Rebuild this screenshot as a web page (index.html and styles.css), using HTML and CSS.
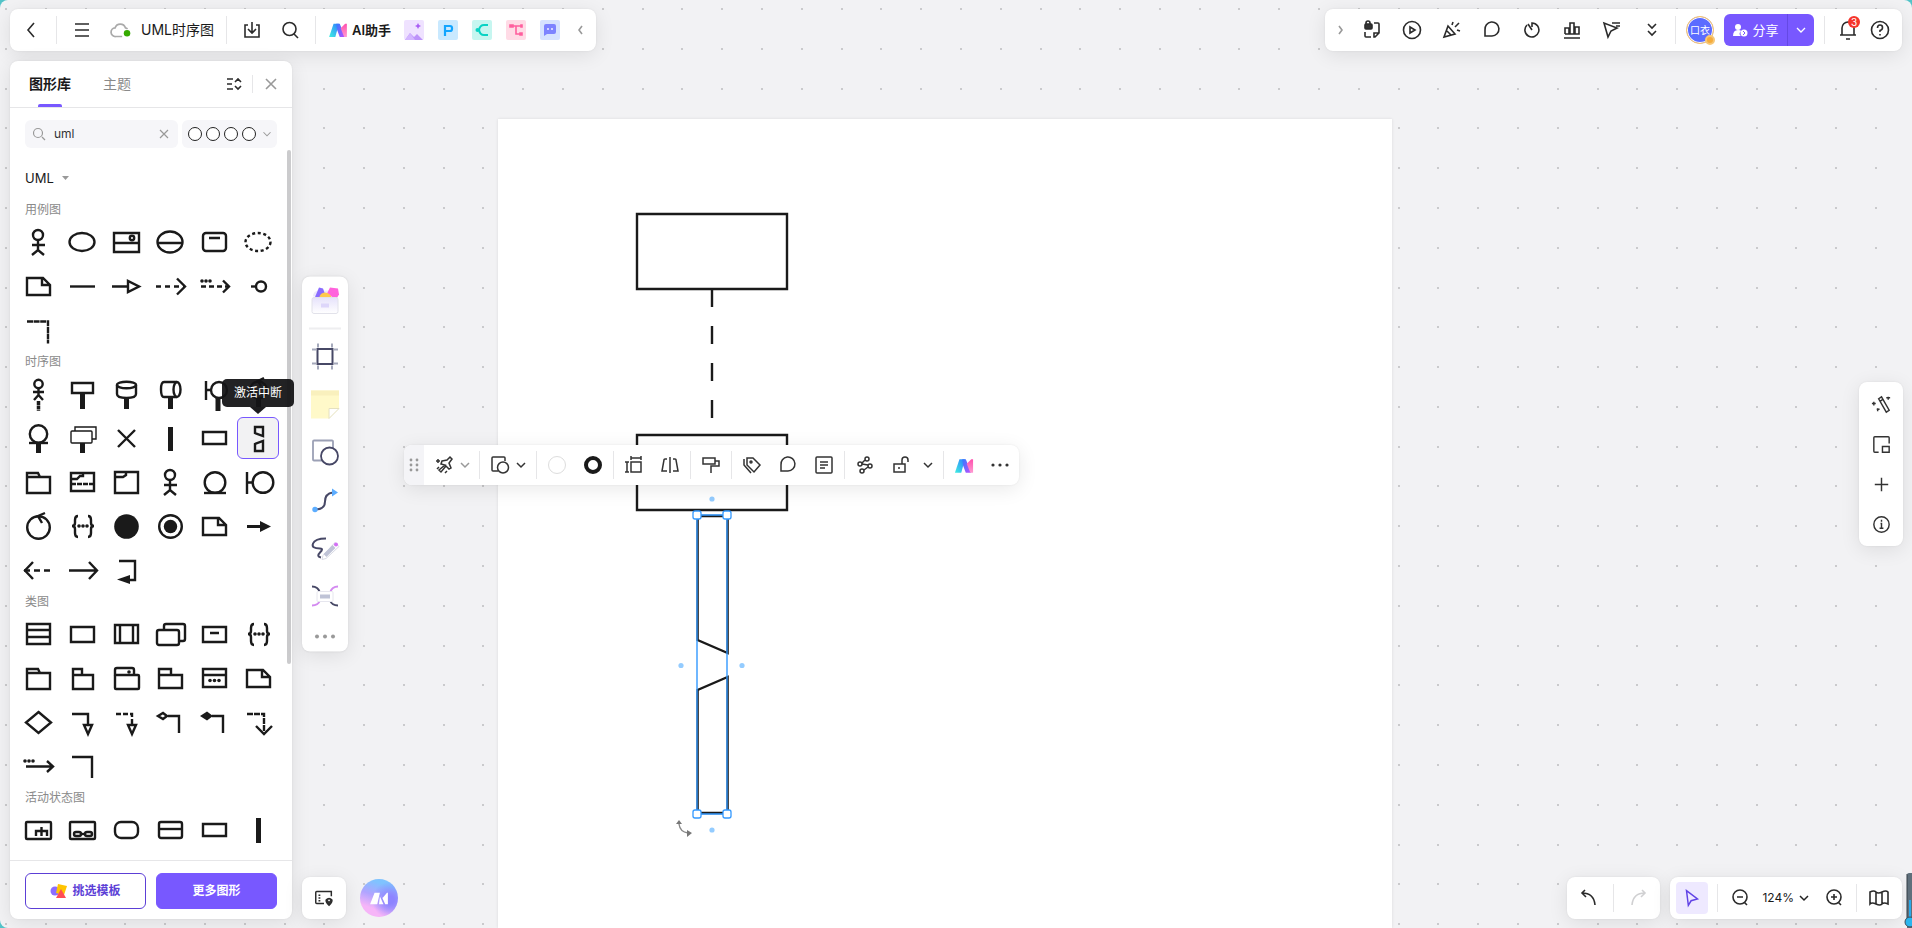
FILE: index.html
```html
<!DOCTYPE html>
<html lang="zh-CN">
<head>
<meta charset="utf-8">
<title>UML时序图</title>
<link rel="stylesheet" href="styles.css">
</head>
<body>
<svg class="defs" aria-hidden="true">
  <defs>
    <linearGradient id="ga" x1="0" y1="1" x2="1" y2="0"><stop offset="0" stop-color="#3ff0e0"/><stop offset="1" stop-color="#2f7dff"/></linearGradient>
    <linearGradient id="gb" x1="0" y1="0" x2="1" y2="1"><stop offset="0" stop-color="#2f7dff"/><stop offset="1" stop-color="#c04dff"/></linearGradient>
    <linearGradient id="gc" x1="0" y1="0" x2="0" y2="1"><stop offset="0" stop-color="#ff4fae"/><stop offset="1" stop-color="#ff9bd0"/></linearGradient>
    <linearGradient id="gbox" x1="0" y1="0" x2="0" y2="1"><stop offset="0" stop-color="#e6e2fb"/><stop offset="1" stop-color="#ffffff"/></linearGradient>
    <symbol id="logo" viewBox="0 0 22 18"><path d="M1 17 6 2h6l-4 15z" fill="url(#ga)"/><path d="M9 2h4l6 15h-6l-3-8z" fill="url(#gb)"/><path d="M14 7l5-5h2v15h-3z" fill="url(#gc)"/></symbol>
    <symbol id="down" viewBox="0 0 16 16"><path d="M4 6l4 4 4-4"/></symbol>
    <symbol id="actor" viewBox="0 0 32 32"><circle cx="16" cy="9" r="5"/><path d="M16 14v10M10 19h13M10 29l6-5 6 5"/></symbol>
    <symbol id="note" viewBox="0 0 32 32"><path d="M5 8h16l7 7v10H5zM20 8v7h8"/></symbol>
    <symbol id="braces" viewBox="0 0 32 32"><path d="M12 6Q9 6 9 10v3q0 3-3 3 3 0 3 3v4q0 4 3 4M22 6q3 0 3 4v3q0 3 3 3-3 0-3 3v4q0 4-3 4"/><g class="solid"><circle cx="13" cy="16" r="1.800"/><circle cx="17" cy="16" r="1.800"/><circle cx="21" cy="16" r="1.800"/></g></symbol>
  </defs>
</svg>

<div class="app">
  <div class="canvas">
    <svg class="dots" aria-hidden="true"><path id="grid"/></svg>
    <div class="page"></div>
    <svg class="drawing" viewBox="0 0 200 640" width="200" height="640" aria-hidden="true">
      <g class="ink">
        <path d="M17 14h150v75H17zM17 235h150v75H17z"/>
        <path d="M92 89v130" stroke-dasharray="18 19"/>
        <path d="M77.600 316h30v137l-30-13zM77.600 613h30V477l-30 13z"/>
      </g>
      <path class="selection" d="M77 315h30v299H77z"/>
      <g class="handle"><rect x="73" y="311" width="8" height="8" rx="2"/><rect x="103" y="311" width="8" height="8" rx="2"/><rect x="73" y="610" width="8" height="8" rx="2"/><rect x="103" y="610" width="8" height="8" rx="2"/></g>
      <g class="anchor"><circle cx="92" cy="299" r="2.600"/><circle cx="61" cy="465.500" r="2.600"/><circle cx="122" cy="465.500" r="2.600"/><circle cx="92" cy="630" r="2.600"/></g>
      <path class="turn" d="M59 624q1 8 9 9"/><path class="turnhead" d="M56 624l3-4 3 4zM67 630l5 3-5 4z"/>
    </svg>
  </div>

  <div class="shell">
    <header class="top">
      <div class="card bar">
        <button class="ib" aria-label="返回"><svg viewBox="0 0 24 24"><path d="M15 5l-6 7 6 7"/></svg></button>
        <i class="sep"></i>
        <button class="ib" aria-label="菜单"><svg viewBox="0 0 24 24"><path d="M5 6h14M5 12h14M5 18h14"/></svg></button>
        <div class="doc">
          <svg class="ic" viewBox="0 0 24 24"><path class="grey" d="M14 18H8a4 4 0 0 1-.5-8A5 5 0 0 1 17 10q1 .2 2 1"/><circle cx="18.500" cy="15" r="3" fill="#36ab00" stroke="none"/></svg>
          <span>UML时序图</span>
        </div>
        <i class="sep"></i>
        <button class="ib" aria-label="导出"><svg viewBox="0 0 24 24"><path d="M8 7H5v12h14V7h-3M12 4v11M8 11l4 4 4-4"/></svg></button>
        <button class="ib" aria-label="搜索"><svg viewBox="0 0 24 24"><circle cx="11.500" cy="11" r="6.500"/><path d="M16 16l4 4"/></svg></button>
        <i class="sep"></i>
        <button class="ai"><svg width="20" height="16"><use href="#logo"/></svg>AI助手</button>
        <div class="apps">
          <button class="app-tile lilac" aria-label="图片"><svg viewBox="0 0 20 20"><path d="M1 20l5-7 4 4 3-3 6 6z" fill="#bd93fa"/><path d="M1 20l5-7 5 7z" fill="#d3b6ff"/><path d="M14 3l1 2 2 1-2 1-1 2-1-2-2-1 2-1z" fill="#a95cf5"/></svg></button>
          <button class="app-tile blue" aria-label="演示"><svg viewBox="0 0 20 20"><path d="M7 16V6h5q2 0 2 2v1q0 2-2 2H8" stroke="#12a5ff" stroke-width="2.200" fill="none"/></svg></button>
          <button class="app-tile mint" aria-label="思维导图"><svg viewBox="0 0 20 20" fill="none" stroke="#08d3c4" stroke-width="2"><path d="M4 10h3q1-5 5-5h4M7 10q1 5 5 5h4"/><circle cx="5.500" cy="10" r="2" fill="#08d3c4" stroke="none"/></svg></button>
          <button class="app-tile pink" aria-label="流程图"><svg viewBox="0 0 20 20" fill="none" stroke="#ff5f9e" stroke-width="1.600"><path d="M6 6h9M10 6v8h5"/><path d="M4 5h3v2H4zM15 5h1v2h-1zM14 13h2v2h-2z" fill="#ff5f9e"/></svg></button>
          <button class="app-tile indigo" aria-label="对话"><svg viewBox="0 0 20 20"><path d="M4 16V6q0-2 2-2h8q2 0 2 2v6q0 2-2 2H7z" fill="#7d83ff"/><path d="M8 8v2M12 8v2" stroke="#fff" stroke-width="1.300"/></svg></button>
        </div>
        <button class="chev pale" aria-label="收起"><svg viewBox="0 0 16 16"><path d="M10 4L7 8l3 4"/></svg></button>
      </div>

      <div class="card bar right">
        <button class="chev pale" aria-label="展开"><svg viewBox="0 0 16 16"><path d="M6 4l3 4-3 4"/></svg></button>
        <div class="tools">
          <button class="ib" aria-label="锁定"><svg viewBox="0 0 24 24"><rect x="5" y="6" width="7" height="5" rx="1" fill="#333"/><path d="M6 6V5q0-2 2-2t2 2v1M14 5h4q1 0 1 1v9l-4 4h-1v-4h5M5 14v4q0 1 1 1h5"/></svg></button>
          <button class="ib" aria-label="播放"><svg viewBox="0 0 24 24"><circle cx="12" cy="12" r="8.500"/><path d="M10 9l5 3-5 3z"/></svg></button>
          <button class="ib" aria-label="庆祝"><svg viewBox="0 0 24 24"><path d="M4 19L8 8l7 8zM7 13l4 4M12 7l1-3M15 9l4-4M17 12l3 1"/></svg></button>
          <button class="ib" aria-label="评论"><svg viewBox="0 0 24 24"><path d="M5 18v-6a7 7 0 1 1 7 6z"/></svg></button>
          <button class="ib" aria-label="计时"><svg viewBox="0 0 24 24"><path d="M7 7a7 7 0 1 0 5-2v4M8 6l4 6"/></svg></button>
          <button class="ib" aria-label="投票"><svg viewBox="0 0 24 24"><path d="M4 20h16M5 16V10h4v6M10 16V5h4v11M15 16V9h4v7zM5 16h14"/></svg></button>
          <button class="ib" aria-label="光标"><svg viewBox="0 0 24 24"><path d="M4 5l4 14 3-6 6-3zM12 5h8M16 8h4"/></svg></button>
          <button class="ib" aria-label="更多"><svg viewBox="0 0 24 24"><path d="M8 6l4 4 4-4M8 13l4 4 4-4"/></svg></button>
        </div>
        <i class="sep"></i>
        <div class="avatar"><span>口衣</span><i class="medal"></i></div>
        <div class="share">
          <button class="share-main"><svg viewBox="0 0 16 16"><circle cx="6" cy="5" r="3"/><path d="M1 14q0-6 5-6 3 0 3 1-3 3 0 5z"/><circle cx="12" cy="11" r="3.500"/><path d="M11 9l2 2-2 2" stroke="#7858ff" fill="none"/></svg>分享</button>
          <button class="share-more" aria-label="分享选项"><svg viewBox="0 0 16 16"><use href="#down"/></svg></button>
        </div>
        <i class="sep"></i>
        <div class="duo">
          <button class="ib bell" aria-label="通知"><svg viewBox="0 0 24 24"><path d="M4 17h16M6 17v-7a6 6 0 0 1 12 0v7M10 21h4"/></svg><b>3</b></button>
          <button class="ib" aria-label="帮助"><svg viewBox="0 0 24 24"><circle cx="12" cy="12" r="8.500"/><path d="M9.500 10q0-3 2.500-3t2.500 2.500T12 12.500V14M12 16v1.500"/></svg></button>
        </div>
      </div>
    </header>

    <aside class="card panel">
      <div class="tabs">
        <button class="tab on">图形库</button>
        <button class="tab">主题</button>
        <div class="tab-tools">
          <button class="chev" aria-label="排序"><svg viewBox="0 0 16 16"><path d="M1 3h6M1 8h5M1 13h6M9 6l3-3 3 3M9 10l3 3 3-3"/></svg></button>
          <i class="sep short"></i>
          <button class="chev pale" aria-label="关闭"><svg viewBox="0 0 16 16"><path d="M3 3l10 10M13 3L3 13"/></svg></button>
        </div>
      </div>
      <div class="filter">
        <label class="search"><svg class="mini" viewBox="0 0 16 16"><circle cx="7" cy="7" r="4.500"/><path d="M11 11l3 3"/></svg><input type="text" value="uml" aria-label="搜索图形"><svg class="mini" viewBox="0 0 16 16"><path d="M4 4l8 8M12 4l-8 8"/></svg></label>
        <button class="swatches" aria-label="样式"><i></i><i></i><i></i><i></i><svg class="mini" viewBox="0 0 16 16"><use href="#down"/></svg></button>
      </div>
      <div class="library">
        <button class="lib-title">UML<svg width="7" height="4" viewBox="0 0 7 4"><path d="M0 0h7L3.500 4z" fill="#999"/></svg></button>

        <h3>用例图</h3>
        <div class="shapes">
          <button aria-label="参与者"><svg><use href="#actor"/></svg></button>
          <button aria-label="用例"><svg><ellipse cx="16" cy="16" rx="12.500" ry="9"/></svg></button>
          <button aria-label="系统"><svg><path d="M4 7h25v19H4zM4 17h25"/><circle cx="22" cy="12" r="2.200"/></svg></button>
          <button aria-label="扩展用例"><svg><ellipse cx="16" cy="16" rx="12.500" ry="10.500"/><path d="M4 17h25"/></svg></button>
          <button aria-label="边界"><svg><rect x="5" y="7" width="23" height="18" rx="3"/><path d="M11 12h11"/></svg></button>
          <button aria-label="协作"><svg><ellipse cx="16" cy="16" rx="12.500" ry="9" stroke-dasharray="3 2.600"/></svg></button>
          <button aria-label="注释"><svg><use href="#note"/></svg></button>
          <button aria-label="关联"><svg><path d="M4 16.500h25"/></svg></button>
          <button aria-label="泛化"><svg><path d="M2 16.500h16M18 11v11l11-5.500z"/></svg></button>
          <button aria-label="依赖"><svg><path d="M2 16.500h28" stroke-dasharray="5 4"/><path d="M23 8.500l8 8-8 8"/></svg></button>
          <button aria-label="包含"><svg><path d="M3 16.500h27" stroke-dasharray="5 3"/><path d="M25 10.500l6 6-6 6"/><g class="solid"><circle cx="4" cy="11" r="1.800"/><circle cx="8" cy="11" r="1.800"/><circle cx="12" cy="11" r="1.800"/></g></svg></button>
          <button aria-label="接口"><svg><path d="M9 16.500h5"/><circle cx="19" cy="16.500" r="5"/></svg></button>
          <button aria-label="锚点"><svg><path d="M5 7.500h21v22" stroke-dasharray="6 .6"/></svg></button>
        </div>

        <h3>时序图</h3>
        <div class="shapes">
          <button aria-label="角色"><svg><circle cx="16.500" cy="6" r="4.200"/><path d="M16.500 10v7M11 14h11M12 22l4.500-5 4.500 5"/><path d="M16.500 23v10" stroke-width="3.500" stroke-dasharray="4 .6"/></svg></button>
          <button aria-label="对象"><svg><path d="M6 5h21v10H6z"/><path class="stem" d="M16.500 15v16"/></svg></button>
          <button aria-label="数据库"><svg><ellipse cx="16.500" cy="7" rx="9.500" ry="3.200"/><path d="M7 7v9q0 4 9.500 4t9.500-4V7"/><path class="stem" d="M16.500 20v11"/></svg></button>
          <button aria-label="队列"><svg><path d="M23 4H10Q7 4 7 11.500T10 19h13"/><ellipse cx="23" cy="11.500" rx="3.500" ry="7.500"/><path class="stem" d="M16.500 19v12"/></svg></button>
          <button aria-label="边界对象"><svg><path d="M8 3v19M8 12h5"/><circle cx="21" cy="12" r="8"/><path class="stem" d="M20 20v13"/></svg></button>
          <button aria-label="控制对象"><svg><circle cx="16.500" cy="12" r="8.500"/><path d="M22 0l-6 3 3 5"/><path class="stem" d="M16.500 20v11"/></svg></button>
          <button aria-label="实体对象"><svg><circle cx="16.500" cy="12" r="8.700"/><path d="M7 21h19"/><path class="stem" d="M16.500 21v10"/></svg></button>
          <button aria-label="多对象"><svg><path d="M9 9V5h21v12h-4" stroke-width="1.400"/><rect x="5" y="9" width="21" height="12" rx="1" stroke-width="1.400"/><path class="stem" d="M16.500 21v10"/></svg></button>
          <button aria-label="销毁"><svg><path d="M8 8l17 17M25 8L8 25"/></svg></button>
          <button aria-label="激活"><svg><path class="stem" d="M16.500 5v24"/></svg></button>
          <button aria-label="矩形"><svg><path d="M5 10h23v12H5z"/></svg></button>
          <button class="picked" aria-label="激活中断"><svg><path d="M13 5h8v9l-8-3zM13 29h8V19l-8 3z"/></svg></button>
          <button aria-label="包"><svg><path d="M5 7h11l2 4h10v16H5zM5 11h13"/></svg></button>
          <button aria-label="组合片段"><svg><path d="M5 7h23v18H5zM5 13h6l3-3h3V7"/><path d="M5 18h23" stroke-dasharray="5 1"/></svg></button>
          <button aria-label="框架"><svg><path d="M5 6h23v21H5zM5 11h8l3-2V6"/></svg></button>
          <button aria-label="小人"><svg><use href="#actor"/></svg></button>
          <button aria-label="实体"><svg><circle cx="17" cy="16.500" r="10.300"/><path d="M6 27h22"/></svg></button>
          <button aria-label="边界类"><svg><path d="M5 6v22M5 16.500h6"/><circle cx="21" cy="16.500" r="10.300"/></svg></button>
          <button aria-label="控制"><svg><circle cx="16.500" cy="17.500" r="11.300"/><path d="M23 3l-7 3 4 7"/></svg></button>
          <button aria-label="约束"><svg><use href="#braces"/></svg></button>
          <button aria-label="起点"><svg><circle class="solid" cx="16.500" cy="16.500" r="12.300"/></svg></button>
          <button aria-label="终点"><svg><circle cx="16.500" cy="16.500" r="11.300"/><circle class="solid" cx="16.500" cy="16.500" r="6.700"/></svg></button>
          <button aria-label="便签"><svg><use href="#note"/></svg></button>
          <button aria-label="消息"><svg><path d="M5 16.500h14" stroke-width="3"/><path class="solid" d="M18 11v11l11-5.500z"/></svg></button>
          <button aria-label="返回消息"><svg><path d="M28 16.500H2" stroke-dasharray="6 4"/><path d="M11 8l-8 8.500 8 8.500"/></svg></button>
          <button aria-label="异步消息"><svg><path d="M3 16.500h28M23 8l8 8.500-8 8.500"/></svg></button>
          <button aria-label="自调用"><svg><path d="M9 7h16v19h-7"/><path class="solid" d="M7 25.500l13-4.500v9z"/></svg></button>
        </div>

        <h3>类图</h3>
        <div class="shapes">
          <button aria-label="类"><svg><path d="M5 6h23v20H5zM5 12h23M5 19h23"/></svg></button>
          <button aria-label="简单类"><svg><path d="M5 9h23v15H5z"/></svg></button>
          <button aria-label="活动类"><svg><path d="M5 7h23v18H5zM10 7v18M23 7v18"/></svg></button>
          <button aria-label="多类"><svg><path d="M10 11V8q0-2 2-2h17q2 0 2 2v13q0 2-2 2h-4"/><rect x="3" y="12" width="22" height="15" rx="2"/></svg></button>
          <button aria-label="接口类"><svg><path d="M5 9h23v15H5zM12 15h9"/></svg></button>
          <button aria-label="类约束"><svg><use href="#braces"/></svg></button>
          <button aria-label="类包"><svg><path d="M5 7h11l2 4h10v16H5zM5 11h13"/></svg></button>
          <button aria-label="小包"><svg><path d="M7 13V7h9v6M7 13h20v14H7z"/></svg></button>
          <button aria-label="组件包"><svg><rect x="5" y="13" width="24" height="14" rx="1"/><path d="M5 14V8q0-2 2-2h15q2 0 2 2v5"/><circle class="solid" cx="19" cy="10" r="1.800"/></svg></button>
          <button aria-label="宽包"><svg><path d="M5 13V7h12v6M5 13h23v13H5z"/></svg></button>
          <button aria-label="对象类"><svg><path d="M5 7h23v18H5zM5 13h23"/><g class="solid"><circle cx="12" cy="18.500" r="1.800"/><circle cx="16.500" cy="18.500" r="1.800"/><circle cx="21" cy="18.500" r="1.800"/></g></svg></button>
          <button aria-label="类注释"><svg><use href="#note"/></svg></button>
          <button aria-label="判断"><svg><path d="M16.500 6L29 16.500 16.500 27 4 16.500z"/></svg></button>
          <button aria-label="继承"><svg><path d="M6 8h16v11M18 19h8l-4 9z"/></svg></button>
          <button aria-label="实现"><svg><path d="M6 8h16v11" stroke-dasharray="5 2"/><path d="M18 19h8l-4 9z"/></svg></button>
          <button aria-label="聚合"><svg><path d="M14 10h11v17M4 10l5-3 4 3-4 3z"/></svg></button>
          <button aria-label="组合"><svg><path d="M14 10h11v17"/><path class="solid" d="M2 10l7-4.500L15 10l-6 4.500z"/></svg></button>
          <button aria-label="类依赖"><svg><path d="M5 8h17v18" stroke-dasharray="6 1"/><path d="M14 20l8 8 8-8"/></svg></button>
          <button aria-label="使用"><svg><path d="M4 16.500h26M25 11l6 5.500-6 5.500"/><g class="solid"><circle cx="3" cy="11" r="1.800"/><circle cx="7" cy="11" r="1.800"/><circle cx="11" cy="11" r="1.800"/></g></svg></button>
          <button aria-label="直角线"><svg><path d="M6 7h20v21"/></svg></button>
        </div>

        <h3>活动状态图</h3>
        <div class="shapes">
          <button aria-label="子活动"><svg><rect x="4" y="8" width="25" height="17" rx="1"/><path d="M14 22v-5h11v5M19.500 13v9"/></svg></button>
          <button aria-label="复合状态"><svg><rect x="4" y="8" width="25" height="17" rx="1"/><rect x="8" y="18" width="7" height="4" rx="2"/><rect x="19" y="18" width="7" height="4" rx="2"/><path d="M15 20h4"/></svg></button>
          <button aria-label="状态"><svg><rect x="5" y="8" width="23" height="16" rx="6"/></svg></button>
          <button aria-label="分栏状态"><svg><rect x="5" y="8" width="23" height="16" rx="2"/><path d="M5 15h23"/></svg></button>
          <button aria-label="对象节点"><svg><path d="M5 10h23v12H5z"/></svg></button>
          <button aria-label="分叉"><svg><path class="stem" d="M16.500 4v25"/></svg></button>
        </div>
        <i class="thumb"></i>
      </div>
      <footer class="foot">
        <button class="btn ghost"><svg width="18" height="16" viewBox="0 0 18 16"><circle cx="5" cy="8" r="4.500" fill="#8c6cff"/><path d="M8 1l9 2-3 9-8-2z" fill="#ffc400"/><path d="M11 6l5 9H6z" fill="#ff4d55"/></svg>挑选模板</button>
        <button class="btn fill">更多图形</button>
      </footer>
    </aside>
  </div>

  <span class="tip" role="tooltip">激活中断</span>

  <nav class="card rail">
    <button aria-label="素材"><svg viewBox="0 0 30 30"><path d="M3 11q0-5 5-6h14q5 1 5 6z" fill="#ece9fb"/><path d="M4 14L9 2l4 1 4 11z" fill="#8a6cff"/><path d="M17 8l3-6 8 1 1 6-3 5z" fill="#ff62dc"/><path d="M9 13q1-6 6-6t7 6z" fill="#ffc94d"/><rect x="2" y="12" width="26" height="16" rx="2" fill="url(#gbox)" stroke="#e2e2ea" stroke-width="1"/><rect x="11" y="18" width="8" height="4" fill="#ddd6fa"/></svg></button>
    <i></i>
    <button aria-label="画框"><svg viewBox="0 0 30 30" fill="none"><path d="M2 8h4M2 22h4M24 8h4M24 22h4M8 2v4M22 2v4M8 24v4M22 24v4" stroke="#a5a9bb" stroke-width="2"/><path d="M7.500 7.500h15v15h-15z" stroke="#474866" stroke-width="2"/></svg></button>
    <button aria-label="便签"><svg viewBox="0 0 30 30"><path d="M1 1h28v18l-10 10H1z" fill="#fff9c9"/><path d="M1 1h28v5H1z" fill="#f9f0bd"/><path d="M19 29V19h10z" fill="#fff" stroke="#e4e0c0" stroke-width="1"/></svg></button>
    <button aria-label="图形"><svg viewBox="0 0 30 30" stroke-width="1.800"><rect x="3" y="3" width="20" height="20" rx="1" fill="#fff" stroke="#9ba0b5"/><circle cx="19.500" cy="18.500" r="8.500" fill="#fff" stroke="#474866"/></svg></button>
    <button aria-label="连线"><svg viewBox="0 0 30 30"><path d="M5 24q10 0 10-8t8-9" fill="none" stroke="#474866" stroke-width="2"/><circle cx="5" cy="24" r="2.700" fill="#5cadff"/><path d="M22 3l6 4-6 4z" fill="#5cadff"/></svg></button>
    <button aria-label="画笔"><svg viewBox="0 0 30 30"><path d="M16 5Q5 5 3 10t7 5q4 0 0 4t1 5" fill="none" stroke="#474866" stroke-width="2"/><path d="M13 22L25 9l4 4-13 12-4 1z" fill="#fff" stroke="#d8dae4" stroke-width="1"/><path d="M15 22l9-9" stroke="#bfc3d6" stroke-width="4"/><circle cx="26" cy="11" r="2" fill="#d270f4"/></svg></button>
    <button aria-label="思维导图"><svg viewBox="0 0 30 30" fill="none" stroke-width="2"><path d="M2 5q6 0 8 6M20 19q2 5 8 5" stroke="#474866"/><path d="M28 5q-6 0-8 6M10 19q-2 5-8 5" stroke="#d38af0"/><rect x="7" y="10" width="16" height="10" rx="1" fill="#fff" stroke="#e6e6ee" stroke-width="1"/><path d="M10 15h10" stroke="#bfc3d6" stroke-width="4"/></svg></button>
    <button class="more" aria-label="更多工具"><svg viewBox="0 0 30 30" fill="#999"><circle cx="7" cy="15" r="2"/><circle cx="15" cy="15" r="2"/><circle cx="23" cy="15" r="2"/></svg></button>
  </nav>

  <div class="card context" role="toolbar">
    <span class="grip"><svg width="12" height="16" viewBox="0 0 12 16" fill="#999"><circle cx="3" cy="3" r="1.400"/><circle cx="9" cy="3" r="1.400"/><circle cx="3" cy="8" r="1.400"/><circle cx="9" cy="8" r="1.400"/><circle cx="3" cy="13" r="1.400"/><circle cx="9" cy="13" r="1.400"/></svg></span>
    <div class="group first"><button aria-label="魔法"><svg viewBox="0 0 24 24"><path d="M10 8l5-1 3-3 2 2-3 4 2 5-2 1-3-3-5 6-2-2 6-5-4-1zM6 6v4M4 8h4M7 14l-2 2M15 18l-2 2"/></svg></button><button class="arrow pale" aria-label="魔法选项"><svg viewBox="0 0 16 16"><use href="#down"/></svg></button></div>
    <div class="group"><button aria-label="切换形状"><svg viewBox="0 0 24 24"><path d="M10 18H5q-1 0-1-1V5q0-1 1-1h11q1 0 1 1v3"/><circle cx="15" cy="14.500" r="5.500"/></svg></button><button class="arrow" aria-label="形状选项"><svg viewBox="0 0 16 16"><use href="#down"/></svg></button></div>
    <div class="group wide"><button aria-label="填充"><i class="fillring"></i></button><button aria-label="边框"><i class="inkring"></i></button></div>
    <div class="group wide"><button aria-label="尺寸"><svg viewBox="0 0 24 24"><path d="M9 9h10v10H9zM9 5h10M9 3v4M19 3v4M5 9v10M3 9h4M3 19h4"/></svg></button><button aria-label="翻转"><svg viewBox="0 0 24 24"><path d="M12 4v16M9 6H7q-1 0-1 1L4 18h5M15 6h2q1 0 1 1l2 11h-5"/></svg></button></div>
    <div class="group"><button aria-label="格式刷"><svg viewBox="0 0 24 24"><path d="M4 5h12v6H4zM16 8h4v5h-8v7"/></svg></button></div>
    <div class="group wide"><button aria-label="标签"><svg viewBox="0 0 24 24"><path d="M7 5h6l7 7-6 7-7-7zM4 6v6l7 8"/><circle cx="11" cy="9" r="1"/></svg></button><button aria-label="评论"><svg viewBox="0 0 24 24"><path d="M5 18v-6a7 7 0 1 1 7 6z"/></svg></button><button aria-label="备注"><svg viewBox="0 0 24 24"><rect x="4" y="4" width="16" height="16" rx="1"/><path d="M8 9h8M8 12h8M8 15h5"/></svg></button></div>
    <div class="group wide"><button aria-label="关联"><svg viewBox="0 0 24 24"><circle cx="14" cy="6" r="2"/><circle cx="7" cy="11" r="2"/><circle cx="17" cy="13" r="2"/><circle cx="9" cy="18" r="2"/><path d="M12 7l-3 3M9 11l6 1M15 14l-4 3"/></svg></button><span class="pair"><button aria-label="解锁"><svg viewBox="0 0 24 24"><path d="M5 11h11v8H5zM10 14v2M13 11V7q0-3 3-3t3 3v2"/></svg></button><button class="arrow" aria-label="锁定选项"><svg viewBox="0 0 16 16"><use href="#down"/></svg></button></span></div>
    <div class="group wide last"><button aria-label="AI"><svg class="logo" viewBox="0 0 22 18"><use href="#logo"/></svg></button><button aria-label="更多"><svg viewBox="0 0 24 24"><g class="solid"><circle cx="5" cy="12" r="1.600"/><circle cx="12" cy="12" r="1.600"/><circle cx="19" cy="12" r="1.600"/></g></svg></button></div>
  </div>

  <nav class="card side">
    <button aria-label="美化"><svg viewBox="0 0 24 24"><path d="M9 6l3-2 8 14-3 2zM10 9l3-2M4 9v4M2 11h4M8 16v3M7 17h3M19 4v3M17 5h4"/></svg></button>
    <button aria-label="小地图"><svg viewBox="0 0 24 24"><path d="M9 20H5q-1 0-1-1V5q0-1 1-1h14q1 0 1 1v6"/><path d="M13 14h7v6h-7z"/></svg></button>
    <button aria-label="添加"><svg viewBox="0 0 24 24"><path d="M12 5v14M5 12h14"/></svg></button>
    <button aria-label="信息"><svg viewBox="0 0 24 24"><circle cx="12" cy="12" r="8"/><path d="M11 11h1v5M10 16h4M12 7v2"/></svg></button>
  </nav>

  <div class="corner left">
    <button class="card mapbtn" aria-label="导航"><svg class="ic" viewBox="0 0 24 24"><path d="M12 18H4q-1 0-1-1V6q0-1 1-1h16v5M6 9h2M6 12h2M6 15h2"/><path d="M17.500 20q-4-4-3-6 3-3 6 0 1 2-3 6z" fill="#333"/><circle cx="17.500" cy="14.500" r="1" fill="#fff" stroke="none"/></svg></button>
    <button class="orb" aria-label="AI助手"><svg width="20" height="16" viewBox="0 0 22 18" fill="#fff"><path d="M1 16L6 3h6L9 16zM12 7l4 9h-5zM13 5l2 4 5-6h1v13h-3z"/></svg></button>
  </div>

  <div class="corner rightc">
    <div class="card mini-bar">
      <button class="ib" aria-label="撤销"><svg viewBox="0 0 24 24"><path d="M8 4L5 7l4 4M5 7q12 0 13 12"/></svg></button>
      <i class="sep"></i>
      <button class="ib faded" aria-label="重做"><svg viewBox="0 0 24 24"><path d="M16 4l3 3-4 4M19 7Q7 7 6 19"/></svg></button>
    </div>
    <div class="card mini-bar zoom">
      <button class="pointer" aria-label="选择"><svg class="ic" viewBox="0 0 24 24"><path d="M6 4l12 9-7 2-3 5z"/></svg></button>
      <i class="sep"></i>
      <button class="ib" aria-label="缩小"><svg viewBox="0 0 24 24"><circle cx="12" cy="11" r="7"/><path d="M16 16l3 3M9 11h6"/></svg></button>
      <button class="percent">124%<svg width="16" height="16" viewBox="0 0 16 16"><use href="#down"/></svg></button>
      <button class="ib" aria-label="放大"><svg viewBox="0 0 24 24"><circle cx="12" cy="11" r="7"/><path d="M16 16l3 3M9 11h6M12 8v6"/></svg></button>
      <i class="sep"></i>
      <button class="ib" aria-label="地图"><svg viewBox="0 0 24 24"><path d="M3 6q4-2 6 0t6 0 6 0v12q-4-2-6 0t-6 0-6 0zM9 6v12M15 6v12"/></svg></button>
    </div>
  </div>
</div>
<svg class="gauge" width="8" height="55" viewBox="0 0 8 55" aria-hidden="true"><path d="M3 55V2q0-2 2-2h3v55z" fill="#5f6f7b"/><path d="M3 46V1" stroke="#333c44"/><path d="M5 27h2v20H5z" fill="#2aa8e8"/><circle cx="6" cy="49" r="5" fill="#2ab5ee" stroke="#3c4c57"/></svg>
<script src="grid.js"></script>
</body>
</html>
```
FILE: grid.js
```js
// Dot grid: 32 unit step at the current zoom level, snapped to whole pixels.
const STEP = 32 * 1.2434;
function drawGrid() {
  let d = "";
  for (let x = 6; x < window.innerWidth; x += STEP) {
    for (let y = 9; y < window.innerHeight; y += STEP) {
      d += `M${Math.round(x) - 1} ${Math.round(y) - 1}h2v2h-2z`;
    }
  }
  document.getElementById("grid").setAttribute("d", d);
}
drawGrid();
window.addEventListener("resize", drawGrid);
```
FILE: styles.css
```css
* { box-sizing: border-box; }
html, body { height: 100%; margin: 0; }
body {
  background: #52c3c8;
  font: 14px/20px Inter, "Noto Sans CJK SC", sans-serif;
  color: #1a1a1a;
  overflow: hidden;
}
button {
  display: flex; align-items: center; justify-content: center;
  margin: 0; padding: 0; border: 0; background: none;
  font: inherit; color: inherit; flex: none;
}
svg { display: block; flex: none; }
.defs { position: absolute; width: 0; height: 0; }
.solid { fill: #1a1a1a; stroke: none; }

.app { position: relative; height: 100%; background: #f2f2f4; border-radius: 8px 8px 0 8px; overflow: hidden; }
.card { background: #fff; border-radius: 8px; box-shadow: 0 0 2px rgba(0,0,0,.08), 0 4px 20px rgba(0,0,0,.09); }
.sep { width: 1px; height: 28px; background: #e6e6e8; flex: none; }
.sep.short { height: 18px; }

/* Canvas */
.canvas { position: absolute; inset: 0; }
.dots { width: 100%; height: 100%; fill: #cacacc; }
.page { position: absolute; left: 498px; top: 119px; bottom: 0; width: 894px; background: #fff; box-shadow: 0 0 3px rgba(0,0,0,.1); }
.drawing { position: absolute; left: 620px; top: 200px; }
.ink { fill: none; stroke: #1a1a1a; stroke-width: 2.4; }
.selection { fill: none; stroke: #3399ff; stroke-width: 1.4; }
.handle { fill: #fff; stroke: #3399ff; stroke-width: 1.3; }
.anchor { fill: #94ccff; }
.turn { fill: none; stroke: #888; stroke-width: 1.4; }
.turnhead { fill: #777; }

/* Shell */
.shell { position: absolute; inset: 0; display: flex; flex-direction: column; gap: 10px; padding: 9px 10px; }
.top { display: flex; justify-content: space-between; flex: none; }
.bar { display: flex; align-items: center; gap: 12px; height: 42px; padding: 0 8px; }
.bar.right { gap: 10px; padding: 0 9px 0 8px; }
.ib, .ic { width: 26px; height: 26px; }
.ib svg { width: 24px; height: 24px; }
.ib svg, .ic, .chev svg, .mini { fill: none; stroke: #2b2b2b; stroke-width: 1.6; }
.grey { stroke: #aaa; }
.chev { width: 16px; height: 16px; }
.chev svg { width: 16px; height: 16px; }
.chev.pale svg { stroke: #999; }
.doc { display: flex; align-items: center; gap: 8px; }
.ai { gap: 4px; margin-right: 1px; font-size: 13px; font-weight: 600; }
.apps { display: flex; gap: 14px; }
.app-tile { width: 20px; height: 20px; border-radius: 2px; }
.app-tile svg { width: 20px; height: 20px; }
.lilac { background: #efe2ff; }
.blue { background: #c9e9ff; }
.mint { background: #c6f6f0; }
.pink { background: #ffdbe6; }
.indigo { background: #d6e2ff; }

.tools { display: flex; gap: 14px; }
.avatar {
  position: relative; display: flex; align-items: center; justify-content: center;
  width: 28px; height: 28px; border-radius: 50%; background: #5b6cff;
  border: 1px solid #ffc766; box-shadow: inset 0 0 0 1px #fff; color: #fff; font-size: 10px;
}
.medal { position: absolute; right: -2px; bottom: -2px; width: 10px; height: 10px; border-radius: 50%; background: #f5ac3c; border: 2px solid #f7c777; }
.share { display: flex; height: 32px; border-radius: 6px; background: #7858ff; color: #fff; overflow: hidden; }
.share-main { gap: 4px; width: 63px; font-size: 13px; }
.share-main svg { width: 16px; height: 16px; fill: #fff; }
.share-more { width: 27px; border-left: 1px solid #6549e4; }
.share-more svg { width: 16px; height: 16px; fill: none; stroke: #fff; stroke-width: 1.3; }
.duo { display: flex; gap: 6px; }
.bell { position: relative; }
.bell b { position: absolute; right: 1px; top: -1px; width: 12px; height: 12px; border-radius: 50%; background: #f5352b; color: #fff; font-size: 10px; line-height: 12px; font-weight: 400; }

/* Shape library */
.panel { display: flex; flex-direction: column; flex: 1; width: 282px; min-height: 0; }
.tabs { display: flex; gap: 32px; height: 47px; padding: 0 13px 0 19px; border-bottom: 1px solid #e6e6e8; flex: none; }
.tab { color: #8a8a8a; }
.tab.on { color: #1a1a1a; font-weight: 700; position: relative; }
.tab.on::after { content: ""; position: absolute; bottom: 0; left: 9px; width: 24px; height: 3px; background: #7858ff; border-radius: 2px 2px 0 0; }
.tab-tools { display: flex; align-items: center; gap: 10px; margin-left: auto; }
.filter { display: flex; gap: 4px; padding: 12px 15px 2px; flex: none; }
.search { display: flex; align-items: center; flex: 1; min-width: 0; height: 28px; padding: 0 6px; gap: 7px; border-radius: 6px; background: #f6f6f9; }
.search input { flex: 1; min-width: 0; padding: 0; border: 0; outline: 0; background: none; font: inherit; font-size: 12px; color: #333; }
.mini { width: 16px; height: 16px; stroke: #999; stroke-width: 1.2; }
.swatches { gap: 4px; width: 95px; height: 28px; padding-left: 2px; border-radius: 6px; background: #f6f6f9; }
.swatches i { width: 14px; height: 14px; border: 1px solid #222; border-radius: 50%; background: #fff; }
.swatches .mini { width: 14px; }
.library { position: relative; flex: 1; min-height: 0; padding: 15px 0 0 7px; overflow: hidden; }
.lib-title { gap: 8px; height: 26px; margin: 0 0 9px 8px; font-size: 13px; }
.library h3 { margin: 1px 0 1px 8px; font-size: 12px; line-height: 20px; font-weight: 400; color: #8a8a8a; }
.shapes { display: grid; grid-template-columns: repeat(6, 42px); gap: 2px; }
.shapes button { height: 42px; border-radius: 6px; }
.shapes svg { width: 32px; height: 32px; overflow: visible; fill: none; stroke: #1a1a1a; stroke-width: 2.4; }
.shapes .solid { fill: #1a1a1a; stroke: none; }
.shapes .stem { stroke-width: 5; }
.shapes .picked { background: #f2f2f3; border: 1px solid #7858ff; }
.thumb { position: absolute; right: 1px; top: 0; width: 4px; height: 514px; border-radius: 2px; background: #cbcbcd; }
.foot { display: flex; gap: 10px; padding: 12px 15px 10px; border-top: 1px solid #e6e6e8; flex: none; }
.btn { flex: 1; height: 36px; gap: 4px; border: 1px solid #7858ff; border-radius: 6px; font-size: 12px; font-weight: 700; }
.ghost { border-color: #5c3fd6; color: #5c3fd6; }
.fill { background: #7858ff; color: #fff; }

.tip { position: absolute; left: 222px; top: 379px; padding: 4px 12px; border-radius: 5px; background: rgba(20,20,22,.94); color: #fff; font-size: 12px; }
.tip::after { content: ""; position: absolute; left: 28px; top: 28px; border: 8px solid transparent; border-top: 7px solid #1c1c1e; border-bottom: 0; }

/* Floating toolbars */
.rail { position: absolute; left: 302px; top: 50%; transform: translateY(-50%); width: 46px; }
.rail button { width: 46px; height: 48px; }
.rail svg { width: 30px; height: 30px; }
.rail > i { display: block; height: 2px; margin: 3px 7px; background: #eeeef0; }
.rail .more { height: 31px; }

.context { position: absolute; left: 404px; top: 445px; display: flex; height: 40px; }
.grip { display: flex; align-items: center; justify-content: center; width: 20px; background: #f4f4f7; border-radius: 8px 0 0 8px; }
.group { display: flex; align-items: center; gap: 2px; margin: 6px 0; padding: 0 8px; border-left: 1px solid #e6e6e8; }
.group.wide { gap: 12px; }
.group.first { border: 0; padding: 0 7px 0 8px; }
.group.last { padding-right: 7px; }
.group button { width: 24px; height: 24px; }
.group svg { width: 24px; height: 24px; fill: none; stroke: #333; stroke-width: 1.5; }
.group .arrow { width: 14px; }
.group .arrow svg { width: 16px; height: 16px; }
.group .pale svg { stroke: #999; }
.group .logo { width: 20px; height: 17px; stroke: none; }
.group .solid { fill: #333; }
.pair { display: flex; align-items: center; gap: 8px; }
.fillring { width: 18px; height: 18px; border-radius: 50%; border: 1px solid #ddd; }
.inkring { width: 18px; height: 18px; border-radius: 50%; border: 4px solid #1a1a1a; }

.side { position: absolute; right: 9px; top: 50%; transform: translateY(-50%); width: 44px; padding: 2px 0; }
.side button { width: 44px; height: 40px; }
.side svg { width: 23px; height: 23px; fill: none; stroke: #333; stroke-width: 1.5; }

.corner { position: absolute; bottom: 9px; display: flex; align-items: center; }
.corner.left { left: 302px; gap: 14px; }
.rightc { right: 10px; gap: 10px; }
.mapbtn { width: 44px; height: 42px; }
.mapbtn .ic { width: 22px; height: 22px; }
.orb { width: 38px; height: 38px; border-radius: 50%; background: radial-gradient(circle at 80% 55%, #8d84ff 0 10%, transparent 50%), linear-gradient(200deg, #7fc3ff 20%, #b0a4ff 48%, #f6b5f8 75%); }
.mini-bar { display: flex; align-items: center; gap: 11px; height: 42px; padding: 0 9px; }
.zoom { gap: 9px; padding: 0 10px 0 6px; }
.pointer { width: 32px; height: 32px; border-radius: 4px; background: #eee9ff; }
.pointer .ic { width: 22px; height: 22px; stroke: #6143e6; }
.faded svg { stroke: #d0d0d2; }
.percent { gap: 2px; font-size: 12px; }
.percent svg { fill: none; stroke: #222; stroke-width: 1.5; }
.gauge { position: absolute; right: 0; bottom: 0; overflow: hidden; }
```
